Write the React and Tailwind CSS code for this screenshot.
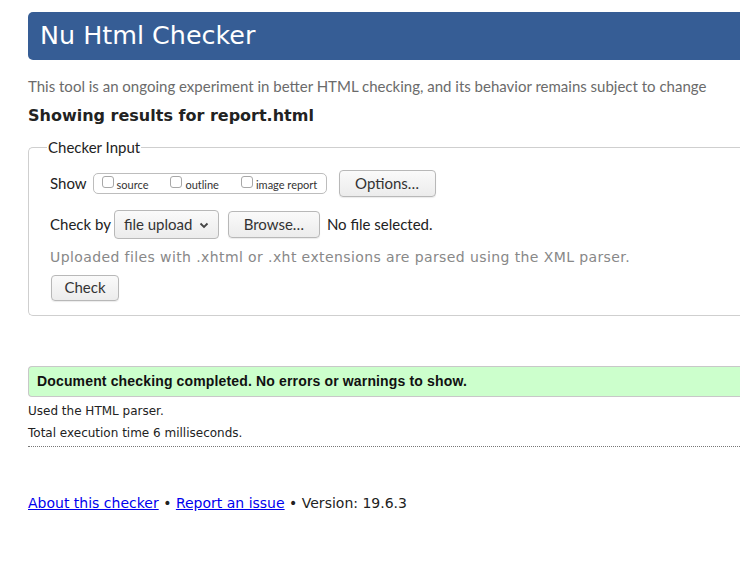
import React from 'react';

const ubuntu = "font-['Lato','Noto_Sans',sans-serif]";
const dejavu = "font-['DejaVu_Sans',sans-serif]";

const Btn = ({ children, className = '' }) => (
    <button className={`rounded-[4px] border border-[#b8b8b8] bg-gradient-to-b from-[#fafafa] to-[#ececec] text-[#333] ${ubuntu} text-[15px] leading-none shadow-[0_1px_1px_rgba(0,0,0,0.08)] ${className}`}>
        {children}
    </button>
);

const Box = ({ label }) => (
    <label className="flex items-center gap-[3px]">
        <span className="w-[12px] h-[12px] rounded-[3px] border border-[#a8a8a8] bg-white -mt-[4px]" />
        <span className="text-[11px] text-[#333] pt-[3px]">{label}</span>
    </label>
);

export default function App() {
    return (
        <div className={`w-[740px] h-[577px] overflow-hidden bg-white pl-[28px] pt-[12px] ${dejavu}`}>
            {/* header */}
            <div className="h-[48px] rounded-l-[5px] bg-[#365d95] flex items-center pl-[12px]">
                <h1 className="text-white text-[25.4px] leading-none pb-[1px]">Nu Html Checker</h1>
            </div>

            <p className={`mt-[17px] text-[15px] text-[#6b6b6b] leading-[18px] ${ubuntu}`}>
                This tool is an ongoing experiment in better HTML checking, and its behavior remains subject to change
            </p>
            <h2 className="mt-[11px] text-[16px] font-bold text-[#222] leading-[20px]">Showing results for report.html</h2>

            {/* fieldset */}
            <fieldset className="mt-[10px] rounded-l-[5px] border border-r-0 border-[#cfcfcf] pl-[21px] pb-[14px] min-w-0">
                <legend className={`px-[1px] ml-[-3px] text-[15px] text-[#222] ${ubuntu}`}>Checker Input</legend>

                <div className={`flex items-center mt-[12px] h-[26px] ${ubuntu}`}>
                    <span className="text-[15px] text-[#222] mr-[6px]">Show</span>
                    <div className="h-[21px] w-[234px] rounded-[5px] border border-[#bdbdbd] flex items-center pl-[8px] gap-[22px]">
                        <Box label="source" />
                        <Box label="outline" />
                        <Box label="image report" />
                    </div>
                    <Btn className="ml-[12px] h-[27px] w-[97px]">Options…</Btn>
                </div>

                <div className={`flex items-center mt-[14px] h-[28px] ${ubuntu}`}>
                    <span className="text-[15px] text-[#222] mr-[3px]">Check by</span>
                    <div className="h-[29px] w-[105px] rounded-[4px] border border-[#b8b8b8] bg-gradient-to-b from-[#fafafa] to-[#ececec] flex items-center pl-[9px] gap-[7px] text-[15px] text-[#333]">
                        <span>file upload</span>
                        <svg width="10" height="7" viewBox="0 0 10 7" className="mt-[1px]">
                            <path d="M1.5 1.5 L5 5 L8.5 1.5" fill="none" stroke="#444" strokeWidth="1.8" />
                        </svg>
                    </div>
                    <Btn className="ml-[9px] h-[27px] w-[92px]">Browse…</Btn>
                    <span className="ml-[7px] text-[15px] text-[#222]">No file selected.</span>
                </div>

                <p className="mt-[9px] text-[14px] text-[#888] leading-[18px] tracking-[0.4px]">
                    Uploaded files with .xhtml or .xht extensions are parsed using the XML parser.
                </p>

                <Btn className="mt-[9px] ml-[1px] h-[26px] w-[68px]">Check</Btn>
            </fieldset>

            {/* results */}
            <div className="mt-[50px] h-[31px] rounded-l-[4px] border border-r-0 border-[#c8c8c8] bg-[#ccffcc] flex items-center pl-[8px]">
                <p className="font-['Liberation_Sans',Arial,sans-serif] font-bold text-[14px] tracking-[0.15px] text-[#111]">
                    Document checking completed. No errors or warnings to show.
                </p>
            </div>
            <p className="mt-[6px] text-[12px] text-[#222] leading-[16px]">Used the HTML parser.</p>
            <p className="mt-[6px] text-[12px] text-[#222] leading-[16px]">Total execution time 6 milliseconds.</p>
            <div className="mt-[5px] border-b border-dotted border-[#777]" />

            <p className="mt-[47px] text-[14px] text-[#222] leading-[18px]">
                <a href="#" className="text-[#0000ee] underline">About this checker</a>
                {' • '}
                <a href="#" className="text-[#0000ee] underline">Report an issue</a>
                {' • Version: 19.6.3'}
            </p>
        </div>
    );
}
